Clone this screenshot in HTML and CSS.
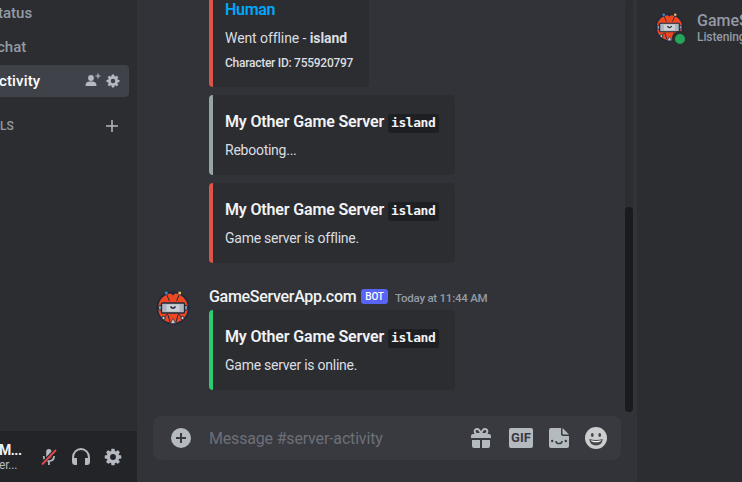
FILE: index.html
```html
<!DOCTYPE html>
<html lang="en">
<head>
<meta charset="utf-8">
<title>server-activity</title>
<link rel="stylesheet" href="styles.css">
</head>
<body>
<svg class="defs" width="0" height="0">
  <symbol id="bot" viewBox="0 0 34 36">
    <circle cx="17" cy="18" r="16.500" fill="#20283a"/>
    <circle cx="17" cy="18" r="14.800" fill="#ee4823"/>
    <path d="M10 3l3.500 8M24 3l-3.500 8M8 27l4-3M26 27l-4-3M12 25l2 7M22 25l-2 7" stroke="#20283a" stroke-width="1"/>
    <path d="M14 2.500l3 3 3-3z" fill="#20283a"/>
    <rect x="2.500" y="15.500" width="29" height="4.500" rx="1" fill="#8f9bac" stroke="#20283a"/>
    <rect x="5.500" y="13" width="23" height="10" rx="1" fill="#aeb5bf" stroke="#20283a" stroke-width="1.300"/>
    <rect x="10.500" y="14.500" width="13" height="7" fill="#cdd1d6"/>
    <path d="M14.500 16.500q2.500 3.500 5 0" fill="none" stroke="#20283a" stroke-width="1.500"/>
    <path d="M14.500 33.500l2.500-5 2.500 5z" fill="#c2cad4" stroke="#20283a" stroke-width=".6"/>
    <circle cx="10.300" cy="3" r="1.500" fill="#2f91d0"/>
    <circle cx="23.700" cy="3" r="1.500" fill="#e5bd62"/>
    <g fill="#c2cad4" stroke="#20283a"><circle cx="7.500" cy="28" r="1.700"/><circle cx="26.500" cy="28" r="1.700"/></g>
  </symbol>
  <symbol id="cog" viewBox="0 0 24 24">
    <g fill="currentColor">
      <g id="teeth"><rect x="9.700" y="1" width="4.600" height="5" rx="1"/><rect x="9.700" y="18" width="4.600" height="5" rx="1"/><rect x="1" y="9.700" width="5" height="4.600" rx="1"/><rect x="18" y="9.700" width="5" height="4.600" rx="1"/></g>
      <use href="#teeth" transform="rotate(45 12 12)"/>
    </g>
    <circle cx="12" cy="12" r="6.200" fill="none" stroke="currentColor" stroke-width="4.600"/>
  </symbol>
</svg>
<div class="app">
  <aside class="sidebar">
    <nav class="channels">
      <div class="channel"><span class="label status">tatus</span></div>
      <div class="channel"><span class="label chat">chat</span></div>
      <div class="channel active">
        <span class="label act">ctivity</span>
        <svg class="invite" viewBox="0 0 16 14"><g fill="currentColor"><circle cx="6" cy="5" r="2.900"/><path d="M.5 13q0-4.500 4-4.500h3q4 0 4 4.500z"/></g><path d="M13 .5v5M10.500 3h5" stroke="currentColor" stroke-width="1.200"/></svg>
        <svg class="small-cog"><use href="#cog"/></svg>
      </div>
      <div class="category"><span class="ls">LS</span>
        <svg class="add" viewBox="0 0 12 12"><path d="M6 0v12M0 6h12" stroke="currentColor" stroke-width="1.500"/></svg>
      </div>
    </nav>
    <div class="user">
      <div class="identity"><div class="nick">M...</div><div class="note">er...</div></div>
      <svg class="mic" viewBox="0 0 16 18"><rect x="5.200" y="1" width="5.300" height="9.500" rx="2.600" fill="currentColor"/><path d="M2.700 8q0 5 5.200 5t5.200-5M7.900 13v4" fill="none" stroke="currentColor" stroke-width="1.700"/><path d="M1 16L14.500 2" stroke="#232428" stroke-width="3.400"/><path d="M1 16.500L15 2" stroke="#e5484d" stroke-width="1.800"/></svg>
      <svg class="phones" viewBox="0 0 18 18"><path d="M1.100 14V9a7.900 7.900 0 0 1 15.800 0v5" fill="none" stroke="currentColor" stroke-width="2"/><path d="M.1 10H5v7H3.100a3 3 0 0 1-3-3zM17.900 10H13v7h1.900a3 3 0 0 0 3-3z" fill="currentColor"/></svg>
      <svg class="big-cog"><use href="#cog"/></svg>
    </div>
  </aside>
  <main class="chat-pane">
    <div class="body">
      <div class="messages">
        <section class="embed red first">
          <div class="human">Human</div>
          <div class="desc went">Went offline - <b>island</b></div>
          <div class="footer">Character ID: 755920797</div>
        </section>
        <section class="embed gray">
          <div class="title"><span>My Other Game Server</span><code>island</code></div>
          <div class="desc reboot">Rebooting...</div>
        </section>
        <section class="embed red">
          <div class="title"><span>My Other Game Server</span><code>island</code></div>
          <div class="desc offline">Game server is offline.</div>
        </section>
        <article class="message">
          <svg class="avatar"><use href="#bot"/></svg>
          <div>
            <header><span class="author">GameServerApp.com</span><span class="tag">BOT</span><time>Today at 11:44 AM</time></header>
            <section class="embed green">
              <div class="title"><span>My Other Game Server</span><code>island</code></div>
              <div class="desc online">Game server is online.</div>
            </section>
          </div>
        </article>
      </div>
      <div class="track"><div class="thumb"></div></div>
    </div>
    <div class="composer">
      <svg class="plus" viewBox="0 0 20 20"><circle cx="10" cy="10" r="10" fill="currentColor"/><path d="M10 5v10M5 10h10" stroke="#383a40" stroke-width="2"/></svg>
      <span class="placeholder">Message #server-activity</span>
      <svg class="gift" viewBox="0 0 20 20"><path d="M10 6Q8.500.8 5.700 1.100C2.500 1.500 3.500 6 6 6h8c2.500 0 3.500-4.500.3-4.900C11.500.8 10 6 10 6" fill="none" stroke="currentColor" stroke-width="2"/><path fill="currentColor" d="M2 6h16a2 2 0 0 1 2 2v2H0V8a2 2 0 0 1 2-2zM1 12h8v8H3a2 2 0 0 1-2-2zM11 12h8v6a2 2 0 0 1-2 2h-6z"/></svg>
      <div class="gif">GIF</div>
      <svg class="sticker" viewBox="0 0 20 20"><path fill="currentColor" d="M2 0h10v6a2 2 0 0 0 2 2h6v10a2 2 0 0 1-2 2H2a2 2 0 0 1-2-2V2a2 2 0 0 1 2-2zM13.500 0L20 6.500h-5.200q-1.300 0-1.300-1.300z"/><g fill="#383a40"><circle cx="3.200" cy="13" r="1.200"/><circle cx="16.800" cy="13" r="1.200"/></g><path d="M7 13q0 2.600 3 2.600t3-2.600" fill="none" stroke="#383a40" stroke-width="1.500"/></svg>
      <svg class="smile" viewBox="0 0 22 22"><circle cx="11" cy="11" r="11" fill="#cccdcf"/><ellipse cx="7.300" cy="8" rx="1.400" ry="2.100" fill="#46474b"/><ellipse cx="14.700" cy="8" rx="1.400" ry="2.100" fill="#46474b"/><path d="M4.300 12q6.700 2 13.400 0-.6 6.500-6.700 6.500T4.300 12z" fill="#46474b"/><path d="M5.800 13.300q5.200 1.300 10.400 0-.5 2-5.200 2t-5.200-2z" fill="#f2f2f2"/></svg>
    </div>
  </main>
  <aside class="members">
    <div class="face"><svg class="member-avatar"><use href="#bot"/></svg><i class="presence"></i></div>
    <div class="member"><div class="member-name">GameServerApp</div><div class="activity">Listening to</div></div>
  </aside>
</div>
</body>
</html>
```
FILE: styles.css
```css
* { box-sizing: border-box; }
body { margin: 0; font-family: Roboto, "Noto Sans", sans-serif; background: #313338; color: #dbdee1; overflow: hidden; }
svg { display: block; flex: none; }
.defs { position: absolute; }
.app { display: flex; width: 742px; height: 482px; white-space: nowrap; overflow: hidden; }

.sidebar { width: 137px; flex: none; display: flex; flex-direction: column; background: #2b2d31; color: #b5bac1; overflow: hidden; }
.channels { flex: 1; margin-top: -3px; }
.channel { display: flex; align-items: center; width: 129px; height: 32px; margin-bottom: 2px; border-radius: 0 4px 4px 0; color: #949ba4; font-weight: 500; font-size: 15px; }
.channel.active { background: #404249; color: #fff; }
.label { flex: 1; }
.status { margin-left: -2px; }
.chat { margin-left: -3px; }
.act { margin-left: -1px; letter-spacing: .15px; }
.invite { width: 16px; height: 14px; color: #b5bac1; margin-right: 5px; margin-bottom: 2px; }
.small-cog { width: 14px; height: 14px; color: #b5bac1; margin-right: 9px; }
.category { display: flex; align-items: center; justify-content: space-between; width: 118px; height: 20px; margin-top: 19px; font-size: 12px; font-weight: 500; color: #949ba4; }
.add { width: 12px; height: 12px; color: #b5bac1; }
.user { height: 51px; display: flex; align-items: center; background: #232428; }
.identity { width: 40px; margin-left: -1px; padding-top: 2px; }
.nick { color: #f2f3f5; font-size: 14px; font-weight: 700; line-height: 15px; letter-spacing: -.5px; }
.note { font-size: 12px; line-height: 14px; letter-spacing: -.2px; }
.mic { width: 16px; height: 18px; margin-left: 2px; }
.phones { width: 18px; height: 18px; margin-left: 15px; }
.big-cog { width: 18px; height: 18px; margin-left: 14px; }

.chat-pane { width: 500px; flex: none; }
.body { display: flex; height: 416px; padding-right: 4px; }
.messages { flex: 1; height: 416px; overflow: hidden; }
.embed { width: 246px; height: 80px; margin: 0 0 8px 72px; padding: 16px 0 0 12px; border-left: 4px solid; border-radius: 4px; background: #2b2d31; }
.first { width: 160px; height: 87px; padding-top: 0; border-top-left-radius: 0; border-top-right-radius: 0; }
.red { border-color: #dc5548; }
.gray { border-color: #95a5a6; }
.green { border-color: #2ecc71; }
.human { height: 20px; line-height: 20px; font-size: 16px; font-weight: 600; color: #00a8fc; letter-spacing: -.3px; }
.title { display: flex; align-items: center; height: 22px; font-size: 16px; font-weight: 600; color: #f2f3f5; letter-spacing: -.15px; }
.title span { width: 163px; padding-bottom: 2px; }
code { width: 51px; height: 19px; padding-left: 3px; border-radius: 3px; background: #1e1f22; font: bold 13px/18px "DejaVu Sans Mono", monospace; letter-spacing: -.45px; margin-top: 2px; }
.desc { height: 18px; margin-top: 8px; line-height: 18px; font-size: 14px; letter-spacing: -.25px; }
.went { margin-top: 9px; letter-spacing: -.08px; }
.footer { margin-top: 8px; line-height: 16px; font-size: 12px; font-weight: 500; letter-spacing: -.26px; }
.message { display: flex; margin-top: 25px; padding-left: 19px; }
.avatar { width: 34px; height: 36px; margin: 2px 19px 0 0; }
header { display: flex; align-items: center; height: 22px; margin-top: -2px; }
.message .embed { margin-top: 2px; margin-left: 0; }
.author { width: 152px; padding-bottom: 2px; font-size: 16px; font-weight: 500; color: #f2f3f5; letter-spacing: -.3px; }
.tag { width: 27px; height: 15px; margin-top: -2px; border-radius: 3px; background: #5865f2; color: #fff; font-size: 10px; font-weight: 500; line-height: 15px; text-align: center; letter-spacing: -.2px; }
time { margin-left: 7px; margin-top: 1px; font-size: 11.500px; font-weight: 500; color: #949ba4; letter-spacing: -.24px; }
.track { width: 8px; height: 412px; padding-top: 207px; border-radius: 4px; background: #2b2d31; }
.thumb { height: 205px; border-radius: 4px; background: #1a1b1e; }
.composer { display: flex; align-items: center; width: 468px; height: 44px; margin-left: 16px; padding-left: 18px; border-radius: 8px; background: #383a40; color: #b5bac1; }
.plus { width: 20px; height: 20px; }
.placeholder { width: 262px; margin-left: 18px; font-size: 16px; color: #6d6f78; letter-spacing: -.18px; }
.gift { width: 20px; height: 20px; }
.gif { width: 24px; height: 20px; margin-left: 18px; border-radius: 2px; background: #b5bac1; color: #383a40; font: 700 13px/20px Roboto, sans-serif; text-align: center; }
.sticker { width: 20px; height: 20px; margin-left: 16px; }
.smile { width: 22px; height: 22px; margin-left: 16px; }

.members { flex: 1; display: flex; padding: 12px 0 0 18px; background: #2b2d31; color: #949ba4; overflow: hidden; }
.face { position: relative; width: 29px; height: 32px; }
.member-avatar { width: 29px; height: 31px; }
.presence { position: absolute; left: 17px; top: 19px; width: 16px; height: 16px; border: 3px solid #2b2d31; border-radius: 50%; background: #23a55a; }
.member { margin-left: 13px; }
.member-name { height: 18px; line-height: 18px; font-size: 16px; font-weight: 500; }
.activity { height: 15px; line-height: 15px; font-size: 12px; font-weight: 500; letter-spacing: -.1px; }
```
